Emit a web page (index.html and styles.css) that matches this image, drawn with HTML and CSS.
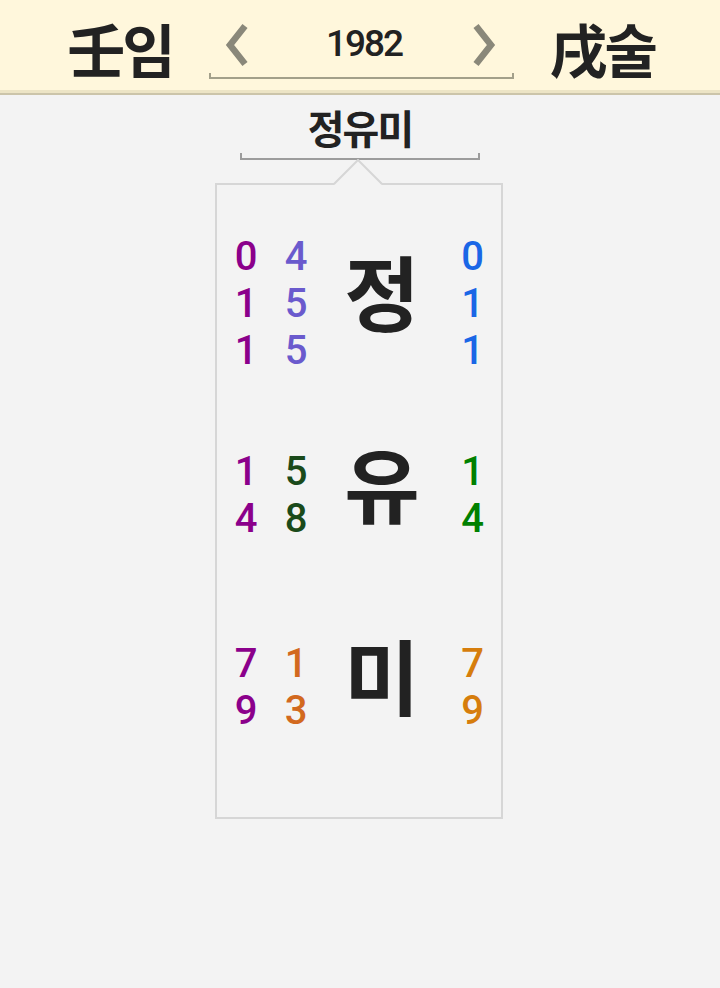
FILE: index.html
```html
<!DOCTYPE html>
<html lang="ko">
<head>
<meta charset="utf-8">
<title>정유미</title>
<link rel="stylesheet" href="styles.css">
</head>
<body>
<header class="topbar">
  <div class="ganzhi">壬임</div>
  <div class="yearnav">
    <div class="yearrow">
      <svg class="chev" viewBox="0 0 24 44" width="24" height="44"><polyline points="20,3 5,22 20,41" fill="none" stroke="#8a887a" stroke-width="6.5"/></svg>
      <span class="year">1982</span>
      <svg class="chev" viewBox="0 0 24 44" width="24" height="44"><polyline points="4,3 19,22 4,41" fill="none" stroke="#8a887a" stroke-width="6.5"/></svg>
    </div>
    <div class="bracket bracket-year"></div>
  </div>
  <div class="ganzhi">戌술</div>
</header>

<main class="content">
  <div class="name-title">정유미</div>
  <div class="bracket bracket-name"></div>

  <section class="card">
    <svg class="notch" viewBox="0 0 50 27" width="50" height="27">
      <polygon points="0,27 25,1 50,27" fill="#f3f3f3"/>
      <polyline points="1,25 25,1 49,25" fill="none" stroke="#d6d6d6" stroke-width="2"/>
    </svg>

    <div class="row">
      <div class="nums c-purple"><span>0</span><span>1</span><span>1</span></div>
      <div class="nums c-slate"><span>4</span><span>5</span><span>5</span></div>
      <div class="big">정</div>
      <div class="nums right c-blue"><span>0</span><span>1</span><span>1</span></div>
    </div>

    <div class="row">
      <div class="nums c-purple"><span>1</span><span>4</span></div>
      <div class="nums c-dgreen"><span>5</span><span>8</span></div>
      <div class="big">유</div>
      <div class="nums right c-green"><span>1</span><span>4</span></div>
    </div>

    <div class="row">
      <div class="nums c-purple"><span>7</span><span>9</span></div>
      <div class="nums c-choco"><span>1</span><span>3</span></div>
      <div class="big">미</div>
      <div class="nums right c-orange"><span>7</span><span>9</span></div>
    </div>
  </section>
</main>
</body>
</html>
```

FILE: styles.css
```css
html, body {
  margin: 0;
  padding: 0;
}

body {
  background: #f3f3f3;
  color: #222;
  font-family: "Noto Sans CJK KR", "Noto Sans", sans-serif;
  width: 720px;
  height: 988px;
  overflow: hidden;
}

.topbar {
  height: 90px;
  background: #fff7dc;
  border-bottom: 3px solid #ece4c5;
  box-shadow: 0 2px 0 #cbc4a9;
  display: flex;
  justify-content: center;
  align-items: flex-start;
  gap: 36px;
  padding-left: 2px;
}

.ganzhi {
  font-size: 58px;
  font-weight: 700;
  line-height: 60px;
  margin-top: 18px;
  letter-spacing: -3px;
  color: #222;
}

.yearnav {
  width: 305px;
  margin-top: 22px;
  display: flex;
  flex-direction: column;
}

.yearrow {
  height: 51px;
  display: flex;
  align-items: center;
  justify-content: space-between;
  padding: 0 18px 0 16px;
}

.chev {
  display: block;
  margin-top: -6px;
}

.year {
  font-family: Roboto, "Noto Sans", sans-serif;
  font-size: 37px;
  font-weight: 500;
  line-height: 40px;
  letter-spacing: -2px;
  color: #222;
  margin-left: 8px;
  margin-top: -7px;
}

.bracket {
  height: 6px;
  box-sizing: border-box;
}

.bracket-year {
  border: 2px solid #a3a08a;
  border-top: none;
}

.content {
  display: flex;
  flex-direction: column;
  align-items: center;
  padding-top: 10px;
}

.name-title {
  font-size: 40px;
  font-weight: 700;
  line-height: 48px;
  letter-spacing: -2px;
  color: #222;
}

.bracket-name {
  width: 240px;
  height: 7px;
  margin-top: 2px;
  border: 2px solid #9c9c9c;
  border-top: none;
  margin-left: -1px;
}

.card {
  position: relative;
  width: 288px;
  box-sizing: border-box;
  margin-top: 23px;
  margin-left: -2px;
  border: 2px solid #d6d6d6;
  padding: 22px 0 34px 0;
}

.notch {
  position: absolute;
  top: -26px;
  left: 116px;
  display: block;
}

.row {
  height: 192px;
  display: grid;
  grid-template-columns: 40px 60px 112px 1fr;
  align-items: center;
  padding-left: 9px;
}

.nums {
  display: flex;
  flex-direction: column;
  align-items: center;
  font-family: Roboto, "Noto Sans", sans-serif;
  font-size: 40px;
  line-height: 47px;
  font-weight: 500;
}

.nums.right {
  padding-left: 6px;
}

.big {
  text-align: center;
  font-size: 82px;
  font-weight: 700;
  line-height: 100px;
  color: #222;
  margin-bottom: 26px;
}

.c-purple { color: #8b008b; }
.c-slate  { color: #6a5acd; }
.c-blue   { color: #1a66e6; }
.c-dgreen { color: #1a4a1a; }
.c-green  { color: #008000; }
.c-choco  { color: #d2691e; }
.c-orange { color: #d67d0c; }
```
